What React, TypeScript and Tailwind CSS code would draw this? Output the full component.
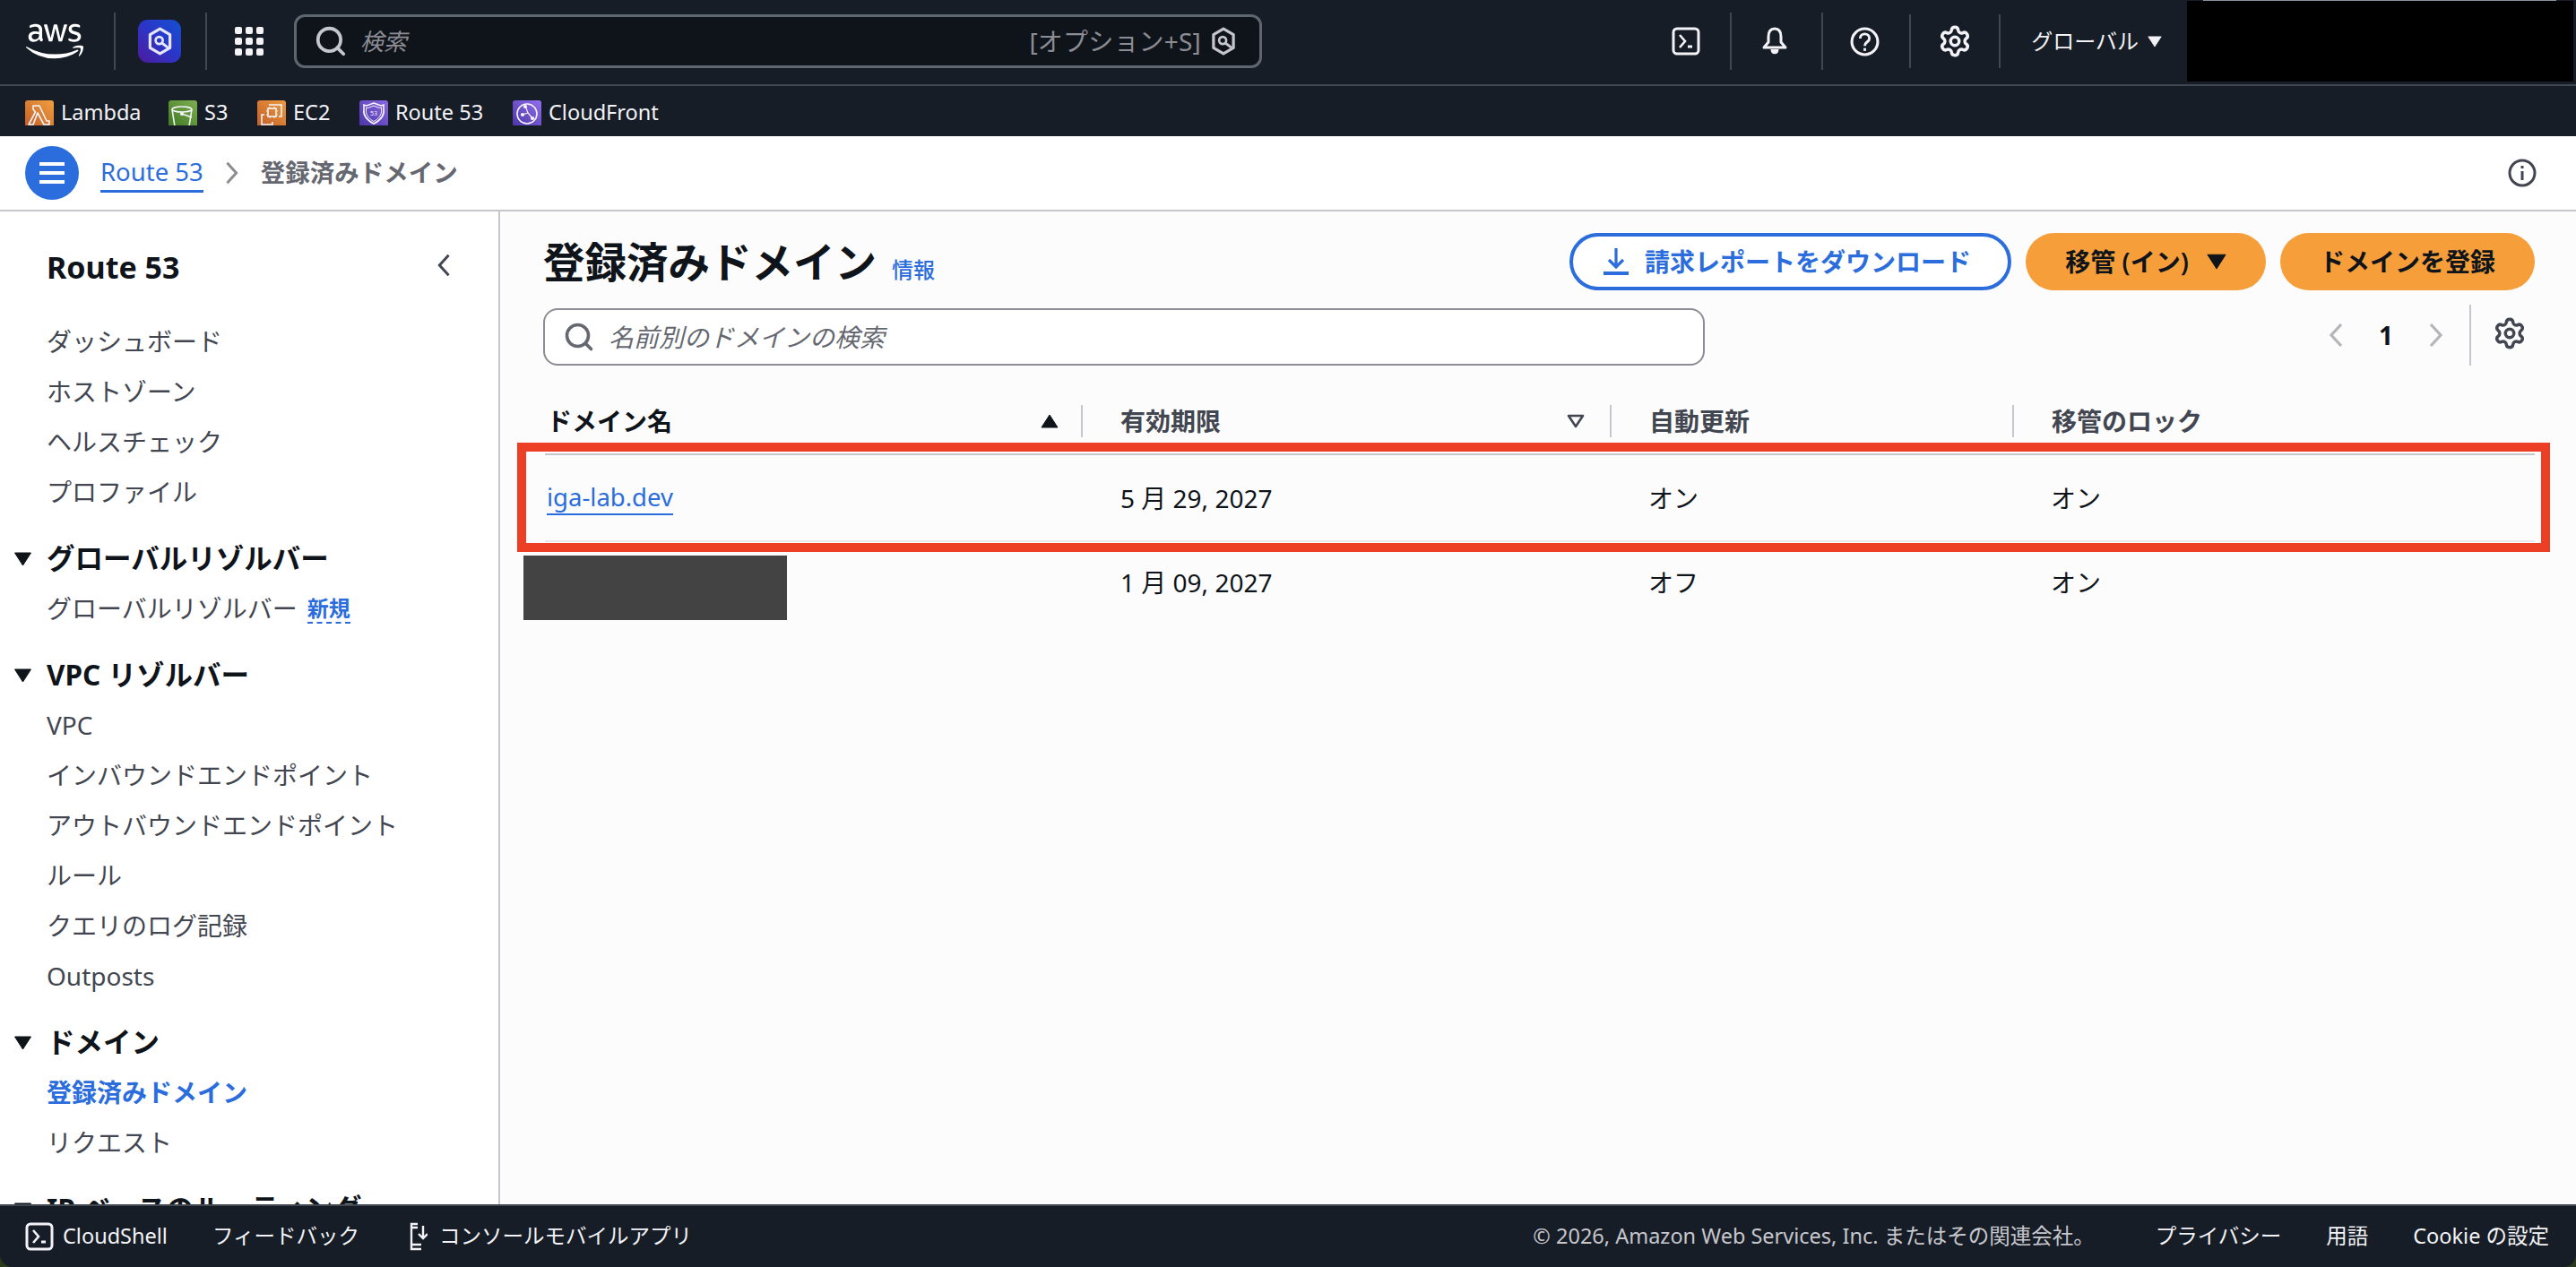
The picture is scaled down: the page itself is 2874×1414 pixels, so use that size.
import { Search, Settings } from 'lucide-react';
import { FaAws } from 'react-icons/fa';

const font = "font-['Noto_Sans','Noto_Sans_CJK_JP',sans-serif]";

function Triangle({ className = '' }: { className?: string }) {
  return (
    <svg viewBox="0 0 20 16" className={className} fill="currentColor">
      <path d="M1 1h18L10 15z" stroke="currentColor" strokeLinejoin="round" />
    </svg>
  );
}

function Chevron({ dir, className = '' }: { dir: 'left' | 'right'; className?: string }) {
  return (
    <svg viewBox="0 0 16 28" className={className} fill="none" stroke="currentColor" strokeWidth="3.2">
      <path d={dir === 'left' ? 'M14 2L3 14l11 12' : 'M2 2l11 12L2 26'} />
    </svg>
  );
}

function Shell({ className = '' }: { className?: string }) {
  return (
    <svg viewBox="0 0 32 32" className={className} fill="none" stroke="currentColor" strokeWidth="3">
      <rect x="2" y="2" width="28" height="28" rx="4" />
      <path d="M9 9l6 7-6 7" strokeWidth="2.6" />
      <path d="M18 22h5" />
    </svg>
  );
}

function QLogo({ className = '' }: { className?: string }) {
  return (
    <svg viewBox="0 0 32 36" className={className} fill="none" stroke="currentColor" strokeWidth="3.6">
      <path d="M16 2.5l12.5 7.2v16.6L16 33.5 3.500 26.300V9.700z" strokeLinejoin="round" />
      <circle cx="15" cy="17" r="4.5" strokeWidth="3" />
      <path d="M18 20l8 6" strokeWidth="3.4" />
    </svg>
  );
}

function Bell() {
  return (
    <svg viewBox="0 0 32 32" className="size-[32px]" fill="none" stroke="currentColor" strokeWidth="3" strokeLinejoin="round">
      <path d="M16 2c-5 0-7 4-7 9v6l-5 6h24l-5-6v-6c0-5-2-9-7-9z" />
      <path d="M13 25c0 5 6 5 6 0" fill="currentColor" />
    </svg>
  );
}

function Help() {
  return (
    <svg viewBox="0 0 32 32" className="size-[33px]" fill="none" stroke="currentColor" strokeWidth="3">
      <circle cx="16" cy="16" r="14" />
      <path d="M11 12.5c0-6.500 10-6.500 10 0 0 4-5 3.500-5 8" strokeWidth="2.800" />
      <path d="M16 23v3" strokeWidth="2.800" />
    </svg>
  );
}

function Gear({ className = '' }: { className?: string }) {
  return <Settings className={className} strokeWidth={2.2} />;
}

function Info() {
  return (
    <svg viewBox="0 0 32 32" className="size-[32px] text-[#424650]" fill="none" stroke="currentColor" strokeWidth="3">
      <circle cx="16" cy="16" r="14" />
      <path d="M16 14v10M16 8v3" />
    </svg>
  );
}

function Tile({ colors, children }: { colors: string; children: React.ReactNode }) {
  return (
    <span className={`block h-[28px] w-[32px] overflow-hidden rounded-t-[3px] bg-gradient-to-tr ${colors}`}>
      <svg viewBox="0 0 32 32" className="size-[32px]" fill="none" stroke="#f5f5fa" strokeWidth="1.600">
        {children}
      </svg>
    </span>
  );
}

const favourites = [
  {
    name: 'Lambda',
    width: 'w-[160px]',
    icon: (
      <Tile colors="from-[#c4602a] to-[#f0a040]">
        <path d="M9 6h7l8 17h3v4h-6L14 14 9 27H4l7.500-14L9 10z" strokeLinejoin="round" />
      </Tile>
    ),
  },
  {
    name: 'S3',
    width: 'w-[99px]',
    icon: (
      <Tile colors="from-[#3f7a24] to-[#7fae50]">
        <ellipse cx="15" cy="10" rx="11" ry="3" />
        <path d="M4 10l3 19h16l3-19" />
        <circle cx="15" cy="15" r="1.300" fill="#f5f5fa" />
        <path d="M15 15l11 4" />
      </Tile>
    ),
  },
  {
    name: 'EC2',
    width: 'w-[114px]',
    icon: (
      <Tile colors="from-[#c4602a] to-[#eb9a3e]">
        <rect x="12" y="9" width="9" height="9" />
        <path d="M14 9V7M19 9V7M14 18v2M19 18v2M12 12h-2M12 16h-2M21 12h2M21 16h2" strokeWidth="1" />
        <path d="M13 5h14v13h-3M8 16H5v11h12v-3" />
      </Tile>
    ),
  },
  {
    name: 'Route 53',
    width: 'w-[171px]',
    icon: (
      <Tile colors="from-[#4f35a8] to-[#8a68e6]">
        <path d="M16 3l8 3 3-1v5c1 7-3 12-11 16C8 22 4 17 5 10V5l3 1z" />
        <path d="M16 6l6.500 2.500 2-.5v3c.5 5-3 9.500-8.500 12.500C10.500 20.500 7 16 7.500 11V8l2 .5z" strokeWidth="1" />
        <text x="16" y="17" textAnchor="middle" fontSize="7" fill="#f5f5fa" stroke="none">53</text>
      </Tile>
    ),
  },
  {
    name: 'CloudFront',
    width: 'w-auto',
    icon: (
      <Tile colors="from-[#4f35a8] to-[#9270ee]">
        <circle cx="16" cy="15" r="11" />
        <path d="M14 6l3 8 5 6M17 14l-6 2" strokeWidth="1.200" />
        <circle cx="14" cy="7" r="1.300" fill="#f5f5fa" />
        <circle cx="11" cy="16" r="1.300" fill="#f5f5fa" />
        <circle cx="22" cy="20" r="1.300" fill="#f5f5fa" />
      </Tile>
    ),
  },
];

type NavItem = { label: string; badge?: string; active?: boolean };

const sections: { title?: string; items: NavItem[] }[] = [
  { items: [{ label: 'ダッシュボード' }, { label: 'ホストゾーン' }, { label: 'ヘルスチェック' }, { label: 'プロファイル' }] },
  { title: 'グローバルリゾルバー', items: [{ label: 'グローバルリゾルバー', badge: '新規' }] },
  {
    title: 'VPC リゾルバー',
    items: [
      { label: 'VPC' },
      { label: 'インバウンドエンドポイント' },
      { label: 'アウトバウンドエンドポイント' },
      { label: 'ルール' },
      { label: 'クエリのログ記録' },
      { label: 'Outposts' },
    ],
  },
  { title: 'ドメイン', items: [{ label: '登録済みドメイン', active: true }, { label: 'リクエスト' }] },
  { title: 'IP ベースのルーティング', items: [] },
];

const columns = 'grid grid-cols-[600px_590px_449px_1fr]';

function TopBar() {
  const sep = 'h-[64px] w-[2px] bg-[#414750]';
  return (
    <header className="relative flex h-[96px] items-start border-b-2 border-[#414750] bg-[#161d26] text-white">
      <div className="flex h-[92px] items-center">
        <FaAws className="ml-[29px] size-[64px]" />
        <div className={`ml-[34px] ${sep}`} />
        <div className="ml-[25px] flex size-[48px] items-center justify-center rounded-[11px] bg-gradient-to-tr from-[#4a189c] via-[#2a35c8] to-[#0f4fd0]">
          <QLogo className="h-[32px] w-[29px] text-[#e6e6fa]" />
        </div>
        <div className={`ml-[27px] ${sep}`} />
        <div className="ml-[31px] grid size-[32px] grid-cols-3 gap-[4px]">
          {Array.from({ length: 9 }).map((_, i) => (
            <span key={i} className="rounded-[2px] bg-[#f3f3f7]" />
          ))}
        </div>
        <div className="ml-[34px] flex h-[60px] w-[1080px] items-center rounded-[12px] border-[3px] border-[#5f6670] bg-[#0f141a] pl-[19px] pr-[25px]">
          <Search className="size-[38px] text-[#c6c6cd]" strokeWidth={2.4} />
          <span className="ml-[14px] text-[26px] italic text-[#8c8c94]">検索</span>
          <span className="ml-auto text-[28px] tracking-[0.2px] text-[#8c8c94]">[オプション+S]</span>
          <QLogo className="ml-[10px] h-[32px] w-[30px] text-[#c6c6cd]" />
        </div>
      </div>
      <div className="ml-auto flex h-[92px] items-center">
        <Shell className="size-[32px] text-[#f3f3f7]" />
        <div className={`ml-[33px] ${sep}`} />
        <div className="ml-[32px] text-[#f3f3f7]"><Bell /></div>
        <div className={`ml-[36px] ${sep}`} />
        <div className="ml-[30px] text-[#f3f3f7]"><Help /></div>
        <div className="ml-[33px] h-[60px] w-[2px] bg-[#414750]" />
        <Gear className="ml-[30px] size-[38px] text-[#f3f3f7]" />
        <div className="ml-[30px] h-[60px] w-[2px] bg-[#414750]" />
        <span className="ml-[34px] text-[24px] text-[#f3f3f7]">グローバル</span>
        <Triangle className="ml-[10px] h-[13px] w-[16px] text-[#f3f3f7]" />
        <div className="ml-[28px] mr-[3px] h-[90px] w-[431px] bg-black" />
      </div>
      {/* thin strip showing above the covered account name */}
      <div className="absolute right-[22px] top-0 h-[1px] w-[394px] bg-[#8a93a0]" />
    </header>
  );
}

function FavouritesBar() {
  return (
    <nav className="flex h-[56px] items-center bg-[#161d26] pl-[28px] pt-[3px] text-[23.5px] text-[#f3f3f7]">
      {favourites.map((f) => (
        <div key={f.name} className={`flex items-center gap-[8px] ${f.width}`}>
          {f.icon}
          <span>{f.name}</span>
        </div>
      ))}
    </nav>
  );
}

function Breadcrumbs() {
  return (
    <div className="flex h-[84px] items-center border-b-2 border-[#c6c6cd] bg-white pl-[28px] pr-[44px] text-[27.5px]">
      <button className="flex size-[60px] flex-col items-center justify-center gap-[6px] rounded-full bg-[#2b6ddc]">
        <span className="h-[4px] w-[28px] bg-white" />
        <span className="h-[4px] w-[28px] bg-white" />
        <span className="h-[4px] w-[28px] bg-white" />
      </button>
      <span className="ml-[24px] border-b-[3px] border-[#2b6ddc] leading-[40px] text-[#2b6ddc]">Route 53</span>
      <Chevron dir="right" className="ml-[24px] h-[26px] w-[16px] text-[#8c8c94]" />
      <span className="ml-[24px] font-semibold text-[#656871]">登録済みドメイン</span>
      <div className="ml-auto"><Info /></div>
    </div>
  );
}

function Sidebar() {
  return (
    <aside className="h-full w-[558px] shrink-0 overflow-hidden border-r-2 border-[#c6c6cd] bg-white">
      <div className="flex h-[92px] items-center justify-between pl-[52px] pr-[53px] pt-[32px]">
        <span className="text-[34px] leading-none font-bold text-[#0f141a]">Route 53</span>
        <Chevron dir="left" className="mb-[4px] h-[26px] w-[16px] text-[#424650]" />
      </div>
      <div className="pt-[24.5px]">
        {sections.map((s, i) => (
          <div key={i} className="mb-[18px]">
            {s.title ? (
              <div className="relative flex h-[56px] items-center pl-[52px] text-[31.5px] font-bold whitespace-nowrap text-[#0f141a]">
                <Triangle className="absolute left-[15px] top-[21px] h-[16px] w-[21px]" />
                {s.title}
              </div>
            ) : null}
            {s.items.map((item) => (
              <div
                key={item.label}
                className={`flex h-[56px] items-center pl-[52px] text-[28px] ${item.active ? 'font-semibold text-[#2b6ddc]' : 'text-[#424650]'}`}
              >
                {item.label}
                {item.badge ? (
                  <span className="ml-[11px] mt-[3px] border-b-2 border-dashed border-[#2b6ddc] text-[24px] leading-[30px] font-bold text-[#2b6ddc]">{item.badge}</span>
                ) : null}
              </div>
            ))}
          </div>
        ))}
      </div>
    </aside>
  );
}

function HeaderCell({ label, dark, sort }: { label: string; dark?: boolean; sort?: 'asc' | 'desc' }) {
  return (
    <div className="flex h-full items-center pl-[2px] pr-[12px]">
      <span className={`text-[28px] font-semibold ${dark ? 'text-[#0f141a]' : 'text-[#424650]'}`}>{label}</span>
      {sort === 'asc' ? <Triangle className="ml-auto mr-[12px] h-[16px] w-[22px] rotate-180 text-[#0f141a]" /> : null}
      {sort === 'desc' ? (
        <svg viewBox="0 0 20 16" className="ml-auto mr-[16px] h-[16px] w-[20px] text-[#424650]" fill="none" stroke="currentColor" strokeWidth="2.600" strokeLinejoin="round">
          <path d="M2 2h16l-8 12z" />
        </svg>
      ) : null}
    </div>
  );
}

function DomainTable() {
  const cell = 'pl-[2px] text-[28px] text-[#0f141a]';
  return (
    <div className="relative mt-[36px] pl-[2px]">
      <div className={`${columns} h-[62px] items-start pt-[8px]`}>
        <div className="h-[36px] border-r-2 border-[#c6c6cd]"><HeaderCell label="ドメイン名" dark sort="asc" /></div>
        <div className="ml-[40px] h-[36px] border-r-2 border-[#c6c6cd]"><HeaderCell label="有効期限" sort="desc" /></div>
        <div className="ml-[40px] h-[36px] border-r-2 border-[#c6c6cd]"><HeaderCell label="自動更新" /></div>
        <div className="ml-[40px] h-[36px]"><HeaderCell label="移管のロック" /></div>
      </div>
      <div className={`${columns} h-[99px] items-center border-y-2 border-t-[#c6c6cd] border-b-[#e8e8ee]`}>
        <div className="-mt-[2px] pl-[2px] text-[27.5px]">
          <span className="border-b-2 border-[#2b6ddc] text-[#2b6ddc]">iga-lab.dev</span>
        </div>
        <div className={`ml-[40px] ${cell}`}>5 月 29, 2027</div>
        <div className={`ml-[39px] ${cell}`}>オン</div>
        <div className={`ml-[39px] ${cell}`}>オン</div>
      </div>
      <div className={`${columns} h-[90px] items-center`}>
        <div className="-ml-[24px] mt-[15px] h-[72px] w-[294px] self-start bg-[#434343]" />
        <div className={`ml-[40px] ${cell}`}>1 月 09, 2027</div>
        <div className={`ml-[39px] ${cell}`}>オフ</div>
        <div className={`ml-[39px] ${cell}`}>オン</div>
      </div>
      {/* annotation drawn over the first row */}
      <div className="absolute -left-[29px] top-[50px] h-[122px] w-[2268px] border-[10px] border-[#ec3f26]" />
    </div>
  );
}

function MainPanel() {
  return (
    <main className="min-w-0 flex-1 bg-[#fcfcfc] pl-[48px] pr-[46px] pt-[24px]">
      <div className="flex h-[64px] items-center justify-between">
        <div className="flex items-baseline">
          <h1 className="text-[46.5px] leading-[64px] font-bold text-[#0f141a]">登録済みドメイン</h1>
          <span className="ml-[17px] text-[24px] font-medium text-[#2b6ddc]">情報</span>
        </div>
        <div className="flex gap-[16px] text-[28px] font-semibold">
          <button className="flex h-[64px] w-[493px] items-center rounded-full border-4 border-[#2b6ddc] bg-white pl-[34px] text-[#2b6ddc]">
            <svg viewBox="0 0 28 30" className="h-[30px] w-[28px]" fill="none" stroke="currentColor" strokeWidth="3.200">
              <path d="M14 0v21M6 13l8 8 8-8" />
              <path d="M0 28h28" strokeWidth="4" />
            </svg>
            <span className="ml-[18px]">請求レポートをダウンロード</span>
          </button>
          <button className="flex h-[64px] w-[268px] items-center justify-center rounded-full bg-[#f59e3a] text-[#0f141a]">
            移管 (イン)
            <Triangle className="ml-[20px] h-[18px] w-[22px]" />
          </button>
          <button className="flex h-[64px] w-[284px] items-center justify-center rounded-full bg-[#f59e3a] text-[#0f141a]">ドメインを登録</button>
        </div>
      </div>
      <div className="mt-[20px] flex items-start">
        <div className="flex h-[64px] w-[1296px] items-center rounded-[16px] border-2 border-[#8c8c94] bg-white pl-[20px]">
          <Search className="size-[36px] text-[#656871]" strokeWidth={2.4} />
          <span className="ml-[15px] text-[28px] italic text-[#656871]">名前別のドメインの検索</span>
        </div>
        <div className="-mt-[4px] ml-auto flex h-[68px] items-center">
          <Chevron dir="left" className="h-[28px] w-[18px] text-[#b4b4bb]" />
          <span className="ml-[39px] text-[28px] font-bold text-[#0f141a]">1</span>
          <Chevron dir="right" className="ml-[40px] h-[28px] w-[16px] text-[#b4b4bb]" />
          <div className="ml-[29px] h-[68px] w-[2px] bg-[#c6c6cd]" />
          <Gear className="mb-[4px] ml-[24px] mr-[9px] size-[38px] text-[#424650]" />
        </div>
      </div>
      <DomainTable />
    </main>
  );
}

function Footer() {
  return (
    <footer className="flex h-[70px] shrink-0 items-center rounded-b-[14px] border-t-2 border-[#414750] bg-[#161d26] pl-[28px] pr-[30px] text-[23.5px] text-[#f3f3f7]">
      <Shell className="size-[32px]" />
      <span className="ml-[10px]">CloudShell</span>
      <span className="ml-[50px]">フィードバック</span>
      <svg viewBox="0 0 20 32" className="ml-[56px] h-[32px] w-[20px]" fill="none" stroke="currentColor" strokeWidth="2.400">
        <path d="M9 2H2v28h11M2 6h7M2 25h11" />
        <path d="M15 4v14M10 13l5 5 5-5" />
      </svg>
      <span className="ml-[13px]">コンソールモバイルアプリ</span>
      <span className="ml-auto text-[#c6c6cd]">© 2026, Amazon Web Services, Inc. またはその関連会社。</span>
      <span className="ml-[68px]">プライバシー</span>
      <span className="ml-[50px]">用語</span>
      <span className="ml-[50px]">Cookie の設定</span>
    </footer>
  );
}

export default function App() {
  return (
    <div className={`${font} flex h-[1414px] w-[2874px] flex-col overflow-hidden bg-[#2a3a1c]`}>
      <TopBar />
      <FavouritesBar />
      <Breadcrumbs />
      <div className="flex min-h-0 flex-1">
        <Sidebar />
        <MainPanel />
      </div>
      <Footer />
    </div>
  );
}
